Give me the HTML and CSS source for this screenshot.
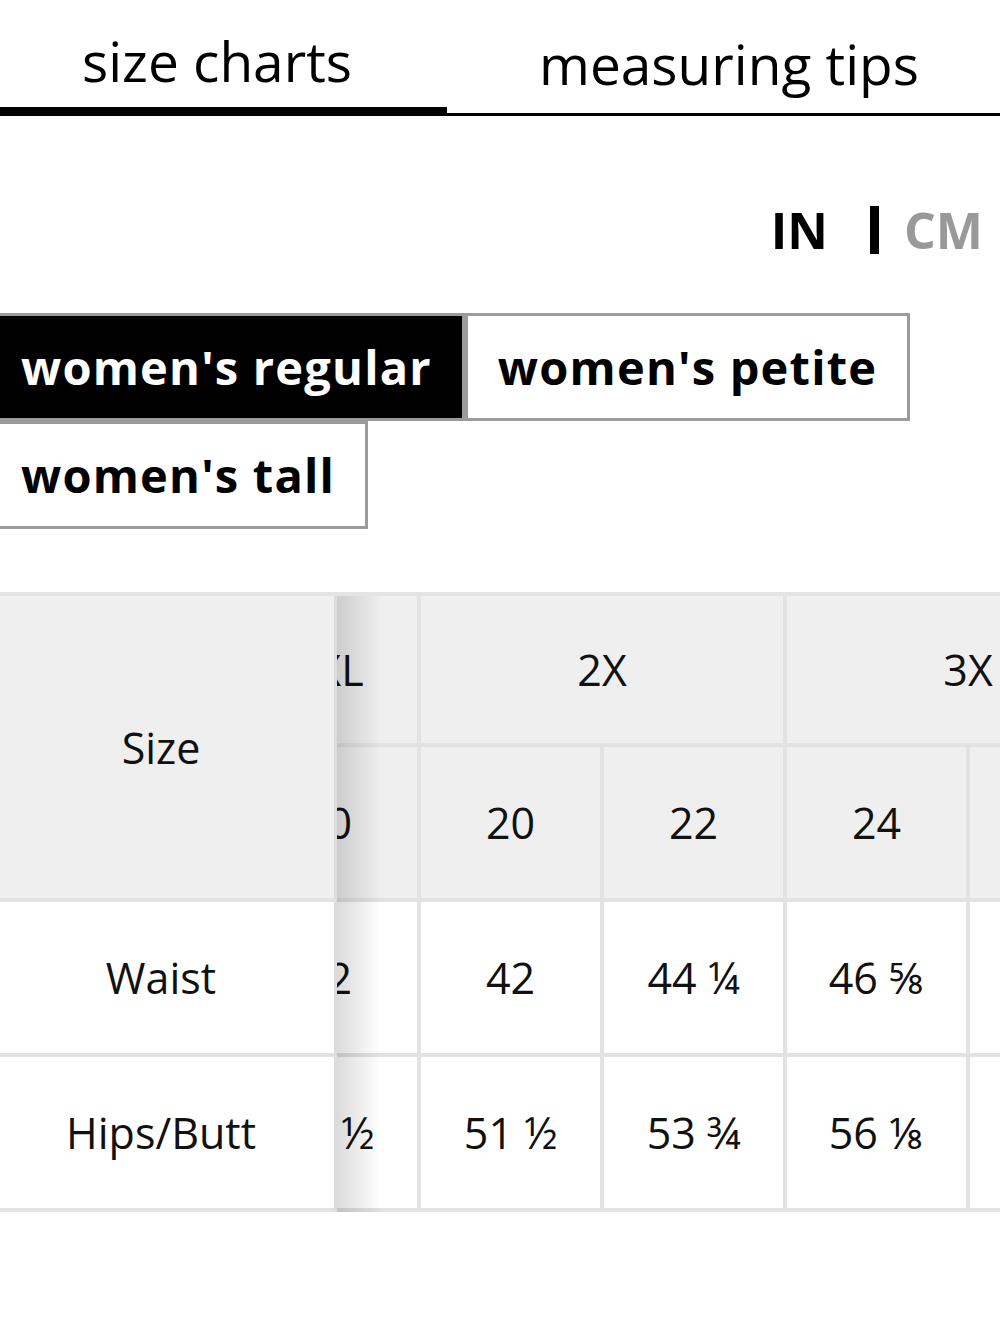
FILE: index.html
```html
<!DOCTYPE html>
<html lang="en">
<head>
<meta charset="utf-8">
<title>Size charts</title>
<link rel="stylesheet" href="styles.css">
</head>
<body>
<nav class="tabs">
  <div class="tab tab-active">size charts</div>
  <div class="tab tab-idle">measuring tips</div>
</nav>

<div class="units">
  <span class="unit-on">IN</span>
  <span class="unit-sep"></span>
  <span class="unit-off">CM</span>
</div>

<div class="fits">
  <button class="fit fit-active">women's regular</button>
  <button class="fit">women's petite</button>
  <button class="fit">women's tall</button>
</div>

<div class="chart" id="chart">
  <table class="size-table">
    <colgroup>
      <col class="col-label">
      <col class="col-size"><col class="col-size"><col class="col-size"><col class="col-size">
      <col class="col-size"><col class="col-size"><col class="col-size"><col class="col-size">
      <col class="col-size"><col class="col-size"><col class="col-size"><col class="col-size">
      <col class="col-size"><col class="col-size"><col class="col-size"><col class="col-size">
      <col class="col-size">
    </colgroup>
    <thead>
      <tr class="row-alpha">
        <th class="sticky" rowspan="2">Size</th>
        <th colspan="2">XS</th>
        <th colspan="2">S</th>
        <th colspan="2">M</th>
        <th colspan="2">L</th>
        <th colspan="2">XL</th>
        <th>XXL</th>
        <th colspan="2">2X</th>
        <th colspan="2">3X</th>
        <th colspan="2">4X</th>
      </tr>
      <tr class="row-num">
        <th>0</th><th>2</th><th>4</th><th>6</th><th>8</th><th>10</th><th>12</th><th>14</th>
        <th>16</th><th>18</th><th>20</th><th>20</th><th>22</th><th>24</th><th>26</th><th>28</th><th>30</th>
      </tr>
    </thead>
    <tbody>
      <tr>
        <th class="sticky">Waist</th>
        <td>26</td><td>27</td><td>28</td><td>29</td><td>30</td><td>31</td><td>32 ½</td><td>34</td>
        <td>37 ¼</td><td>39 ½</td><td>42</td><td>42</td><td>44 ¼</td><td>46 ⅝</td><td>49</td><td>51 ⅜</td><td>53 ¾</td>
      </tr>
      <tr>
        <th class="sticky">Hips/Butt</th>
        <td>35</td><td>36</td><td>37</td><td>38</td><td>39</td><td>40</td><td>41 ½</td><td>43</td>
        <td>46 ¾</td><td>49</td><td>51 ½</td><td>51 ½</td><td>53 ¾</td><td>56 ⅛</td><td>58 ½</td><td>60 ⅞</td><td>63 ¼</td>
      </tr>
    </tbody>
  </table>
</div>
<script src="script.js"></script>
</body>
</html>
```

FILE: styles.css
```css
* { box-sizing: border-box; }

html, body {
  margin: 0;
  background: #fff;
}

body {
  font-family: "Open Sans", "Liberation Sans", sans-serif;
  color: #000;
  overflow-x: hidden;
}

/* top tabs */
.tabs {
  display: flex;
  align-items: flex-end;
  height: 116px;
}

.tab {
  font-size: 55px;
  line-height: 74px;
  white-space: nowrap;
  color: #000;
}

.tab-active {
  width: 447px;
  padding-left: 82px;
  padding-bottom: 9px;
  border-bottom: 9px solid #000;
}

.tab-idle {
  flex: 1;
  padding-left: 92px;
  padding-bottom: 12px;
  border-bottom: 3px solid #000;
}

/* unit switch */
.units {
  display: flex;
  justify-content: flex-end;
  align-items: center;
  margin-top: 79px;
  padding-right: 17px;
  font-size: 50px;
  font-weight: 700;
  line-height: 70px;
}

.unit-on {
  color: #000;
  margin-right: 42px;
}

.unit-sep {
  width: 9px;
  height: 48px;
  background: #000;
  margin-right: 25px;
}

.unit-off {
  color: #999;
}

/* fit buttons */
.fits {
  display: flex;
  flex-wrap: wrap;
  margin: 48px 0 0 -12px;
}

.fit {
  height: 108px;
  margin: 0;
  padding: 0 30px;
  border: 3px solid #9b9b9b;
  border-radius: 0;
  background: #fff;
  color: #000;
  font-family: "Open Sans", "Liberation Sans", sans-serif;
  font-size: 47px;
  font-weight: 700;
  letter-spacing: 1.2px;
  line-height: 102px;
  white-space: nowrap;
}

.fit-active {
  background: #000;
  color: #fff;
}

/* chart */
.chart {
  margin: 63px 0 0 -12px;
  overflow-x: auto;
  scrollbar-width: none;
}

.chart::-webkit-scrollbar { display: none; }

.size-table {
  table-layout: fixed;
  width: 3460px;
  border-collapse: separate;
  border-spacing: 0;
  border-top: 4px solid #e4e4e4;
  font-size: 43px;
  color: #111;
}

.col-label { width: 349px; }
.col-size { width: 183px; }

.size-table th,
.size-table td {
  height: 155px;
  padding: 0;
  text-align: center;
  vertical-align: middle;
  font-weight: 400;
  white-space: nowrap;
  border-right: 4px solid #e2e2e2;
  border-bottom: 4px solid #e2e2e2;
  background: #fff;
}

.size-table thead th {
  background: #efefef;
}

.size-table .row-alpha th {
  height: 151px;
}

.size-table .sticky {
  position: sticky;
  left: 0;
  z-index: 2;
  border-right: 3px solid #dcdcdc;
}

.size-table .sticky::after {
  content: "";
  position: absolute;
  top: 0;
  bottom: -4px;
  left: calc(100% + 3px);
  width: 44px;
  background: linear-gradient(to right, rgba(0, 0, 0, 0.14), rgba(0, 0, 0, 0));
  pointer-events: none;
}
```

FILE: script.js
```js
document.getElementById('chart').scrollLeft = 1929;
```
